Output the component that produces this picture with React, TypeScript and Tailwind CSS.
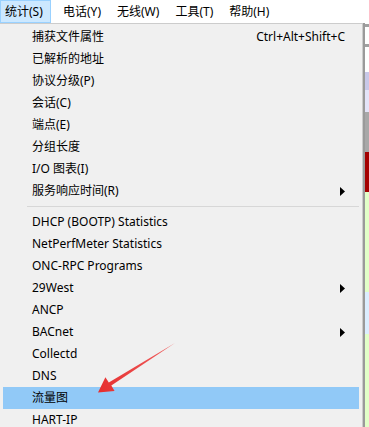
const menuBar = ["统计(S)", "电话(Y)", "无线(W)", "工具(T)", "帮助(H)"];

type Item = { label: string; shortcut?: string; sub?: boolean; active?: boolean };

const topItems: Item[] = [
  { label: "捕获文件属性", shortcut: "Ctrl+Alt+Shift+C" },
  { label: "已解析的地址" },
  { label: "协议分级(P)" },
  { label: "会话(C)" },
  { label: "端点(E)" },
  { label: "分组长度" },
  { label: "I/O 图表(I)" },
  { label: "服务响应时间(R)", sub: true },
];

const bottomItems: Item[] = [
  { label: "DHCP (BOOTP) Statistics" },
  { label: "NetPerfMeter Statistics" },
  { label: "ONC-RPC Programs" },
  { label: "29West", sub: true },
  { label: "ANCP" },
  { label: "BACnet", sub: true },
  { label: "Collectd" },
  { label: "DNS" },
  { label: "流量图", active: true },
  { label: "HART-IP" },
];

// packet list colours peeking out on the right of the menu
const strip = [
  { h: 24, c: "bg-white" },
  { h: 3, c: "bg-[#a0a0a0]" },
  { h: 17, c: "bg-white" },
  { h: 3, c: "bg-[#a0a0a0]" },
  { h: 25, c: "bg-white" },
  { h: 18, c: "bg-[#c8c8e8]" },
  { h: 22, c: "bg-[#e4e4f8]" },
  { h: 40, c: "bg-[#a8a8a8]" },
  { h: 40, c: "bg-[#a40000]" },
  { h: 100, c: "bg-[#e2ffc8]" },
  { h: 42, c: "bg-[#dceeff]" },
  { h: 93, c: "bg-[#e2ffc8]" },
];

function Row({ item }: { item: Item }) {
  const bg = item.active ? "bg-[#91c9f7]" : "bg-transparent";
  return (
    <div className="h-[22px] px-[3px]">
      <div className={"h-full grid grid-cols-[29px_1fr_auto_14px] items-center " + bg}>
        <span />
        <span className="text-black whitespace-nowrap">{item.label}</span>
        <span className="flex items-center text-black">
          {item.shortcut}
          {item.sub && (
            <svg width="5" height="9" viewBox="0 0 5 9">
              <path d="M0 0 L5 4.5 L0 9 Z" fill="#000" />
            </svg>
          )}
        </span>
        <span />
      </div>
    </div>
  );
}

export default function App() {
  return (
    <div
      className="relative w-[369px] h-[427px] overflow-hidden bg-white text-[12px] leading-none"
      style={{ fontFamily: '"Noto Sans", "Noto Sans CJK SC", sans-serif' }}
    >
      <div className="h-[23px] flex items-center bg-white">
        {menuBar.map((m, i) => (
          <div
            key={m}
            className={
              i === 0
                ? "h-[23px] flex items-center px-[4px] mr-[8px] bg-[#cce8ff] border border-[#99d1ff] w-[51px]"
                : "h-[23px] flex items-center px-[4px] mr-[8px]"
            }
          >
            {m}
          </div>
        ))}
      </div>

      <div className="flex">
        <div className="w-[363px] h-[404px] bg-[#f0f0f0] border-t border-r border-[#cccccc] pt-[2px]">
          {topItems.map((it) => (
            <Row key={it.label} item={it} />
          ))}
          <div className="h-[9px] flex items-center pl-[27px] pr-[3px]">
            <div className="h-px w-full bg-[#d7d7d7]" />
          </div>
          {bottomItems.map((it) => (
            <Row key={it.label} item={it} />
          ))}
        </div>
        <div className="w-[2px] bg-[#9a9a9a]" />
        <div className="flex-1 flex flex-col -mt-[23px]">
          {strip.map((s, i) => (
            <div key={i} className={s.c} style={{ height: s.h }} />
          ))}
        </div>
      </div>

      <svg className="absolute left-0 top-0 pointer-events-none" width="369" height="427">
        <defs>
          <linearGradient id="ar" x1="175" y1="343" x2="98" y2="392" gradientUnits="userSpaceOnUse">
            <stop offset="0" stopColor="#f06060" />
            <stop offset="1" stopColor="#e62e2e" />
          </linearGradient>
        </defs>
        <path
          d="M175 343 L111.3 385.6 L114.6 391 L98 392.6 L105.4 377.2 L108.8 382.4 Z"
          fill="url(#ar)"
        />
      </svg>
    </div>
  );
}
